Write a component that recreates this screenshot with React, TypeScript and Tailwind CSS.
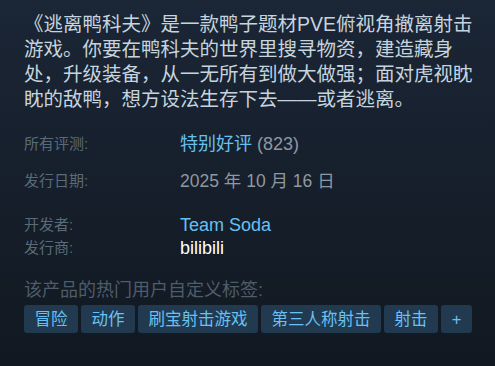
const TAGS = ["冒险", "动作", "刷宝射击游戏", "第三人称射击", "射击"]

const FONT = { fontFamily: '"Liberation Sans", Arial, "Noto Sans CJK SC", sans-serif' }

export default function App() {
  return (
    <div
      className="w-[495px] h-[366px] overflow-hidden bg-gradient-to-b from-[#1b2636] to-[#111821] px-[24px] pt-[12px]"
      style={FONT}
    >
      {/* description */}
      <p className="w-[460px] text-[19.5px] leading-[25px] text-[#c6d4df]">
        《逃离鸭科夫》是一款鸭子题材PVE俯视角撤离射击游戏。你要在鸭科夫的世界里搜寻物资，建造藏身处，升级装备，从一无所有到做大做强；面对虎视眈眈的敌鸭，想方设法生存下去——或者逃离。
      </p>

      {/* reviews */}
      <div className="mt-[20px] flex items-center h-[25px]">
        <div className="w-[156px] text-[15px] text-[#5a6b78]">所有评测:</div>
        <div className="text-[18px] text-[#66c0f4]">
          特别好评 <span className="text-[#8f98a0]">(823)</span>
        </div>
      </div>

      {/* release date */}
      <div className="mt-[12px] flex items-center h-[25px]">
        <div className="w-[156px] text-[15px] text-[#5a6b78]">发行日期:</div>
        <div className="text-[17.5px] text-[#8f98a0]">2025 年 10 月 16 日</div>
      </div>

      {/* dev / publisher */}
      <div className="mt-[20px] flex items-center h-[23px]">
        <div className="w-[156px] text-[15px] text-[#5a6b78]">开发者:</div>
        <div className="text-[18px] text-[#66c0f4]">Team Soda</div>
      </div>
      <div className="flex items-center h-[23px]">
        <div className="w-[156px] text-[15px] text-[#5a6b78]">发行商:</div>
        <div className="text-[18px] text-white">bilibili</div>
      </div>

      {/* tags */}
      <div className="mt-[20px] h-[20px] flex items-center text-[18px] text-[#4e5d69]">
        该产品的热门用户自定义标签:
      </div>
      <div className="mt-[5px] flex gap-[3px] w-[460px]">
        {TAGS.map((t) => (
          <span
            key={t}
            className="shrink-0 whitespace-nowrap h-[28px] px-[10.5px] flex items-center rounded-[3px] bg-[#223a50] text-[16.5px] text-[#67c1f5]"
          >
            {t}
          </span>
        ))}
        <span className="shrink-0 h-[28px] w-[31px] flex items-center justify-center rounded-[3px] bg-[#223a50] text-[16.5px] text-[#67c1f5]">
          +
        </span>
      </div>
    </div>
  )
}
